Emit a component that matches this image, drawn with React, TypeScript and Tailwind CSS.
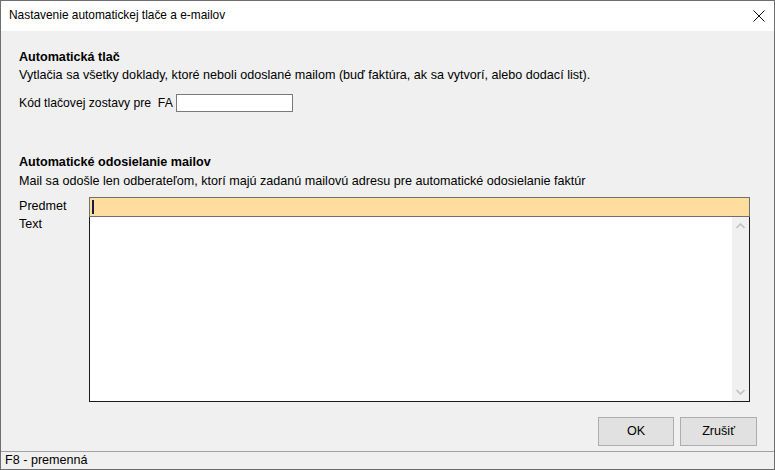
import type { ReactElement } from 'react'

const FONT = { fontFamily: '"Liberation Sans", Arial, sans-serif' }

export default function App(): ReactElement {
  return (
    <div
      className="flex h-[470px] w-[775px] flex-col border border-[#6e6e6e] bg-[#f0f0f0] text-[12.6px] text-black"
      style={FONT}
    >
      {/* title bar */}
      <div className="flex h-[30px] shrink-0 items-center justify-between bg-white pl-[8px] pr-[9px]">
        <span className="text-[11.9px]">Nastavenie automatickej tlače a e-mailov</span>
        <svg width="12" height="12" viewBox="0 0 12 12">
          <path d="M0.5 0.5 L11.5 11.5 M11.5 0.5 L0.5 11.5" stroke="#111" strokeWidth="1" />
        </svg>
      </div>

      <div className="flex flex-1 flex-col pl-[18px] pr-[24px]">
        <div className="mt-[19px] font-bold leading-[15px]">Automatická tlač</div>
        <div className="mt-[3px] leading-[15px]">
          Vytlačia sa všetky doklady, ktoré neboli odoslané mailom (buď faktúra, ak sa vytvorí, alebo
          dodací list).
        </div>
        <div className="mt-[11px] flex items-center">
          <span className="whitespace-pre text-[12.2px]">Kód tlačovej zostavy pre  FA</span>
          <div className="ml-[3px] h-[18px] w-[117px] border border-[#7a7a7a] bg-white" />
        </div>

        <div className="mt-[43px] font-bold leading-[15px]">Automatické odosielanie mailov</div>
        <div className="mt-[4px] leading-[15px]">
          Mail sa odošle len odberateľom, ktorí majú zadanú mailovú adresu pre automatické odosielanie
          faktúr
        </div>

        <div className="mt-[8px] flex">
          <div className="flex w-[70px] flex-col leading-[15px]">
            <span className="mt-[2px]">Predmet</span>
            <span className="mt-[3px]">Text</span>
          </div>
          <div className="flex flex-1 flex-col">
            <div className="flex h-[20px] items-center border border-[#6f6f6f] bg-[#ffdd9f] pl-[2px]">
              <div className="h-[14px] w-[2px] bg-[#1a1a4a]" />
            </div>
            <div className="flex h-[185px] border border-t-0 border-[#1c1c1c] bg-white">
              <div className="flex-1" />
              <div className="flex w-[17px] flex-col items-center justify-between bg-[#f0f0f0] py-[6px]">
                <svg width="9" height="6" viewBox="0 0 9 6">
                  <path d="M0.5 5 L4.5 1 L8.5 5" fill="none" stroke="#c2c2c2" strokeWidth="1.6" />
                </svg>
                <svg width="9" height="6" viewBox="0 0 9 6">
                  <path d="M0.5 1 L4.5 5 L8.5 1" fill="none" stroke="#c2c2c2" strokeWidth="1.6" />
                </svg>
              </div>
            </div>
          </div>
        </div>

        <div className="mr-[-7px] mt-[15px] flex justify-end gap-[6px]">
          <button className="h-[29px] w-[76px] border border-[#adadad] bg-[#e1e1e1] text-[12.6px]">OK</button>
          <button className="h-[29px] w-[77px] border border-[#adadad] bg-[#e1e1e1] text-[12.6px]">Zrušiť</button>
        </div>
      </div>

      <div className="flex h-[18px] shrink-0 items-center border-t border-[#a0a0a0] pl-[4px] text-[12.6px]">
        F8 - premenná
      </div>
    </div>
  )
}
